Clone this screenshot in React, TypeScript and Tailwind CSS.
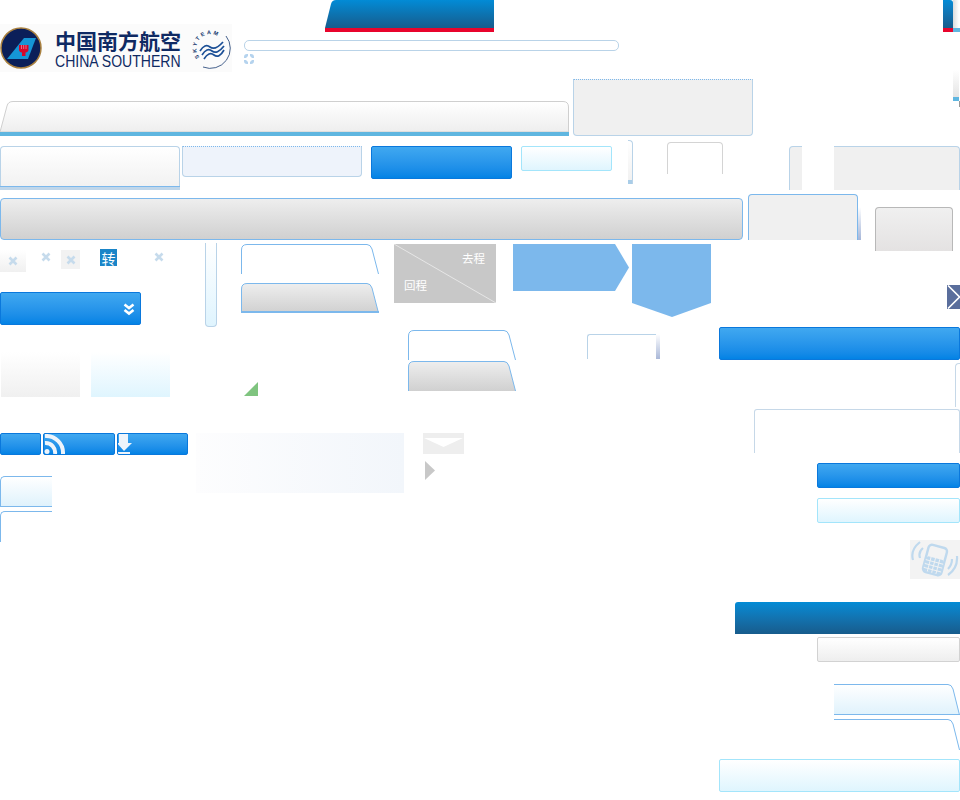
const cx = "absolute";
const blueBtn = "rounded-[2px] border border-[#0a78dc] bg-gradient-to-b from-[#40a8f0] to-[#0283e5]";
const lightBtn = "rounded-[2px] border border-[#a3e5fb] bg-gradient-to-b from-white to-[#dff5fe]";
const greyBar = "bg-gradient-to-b from-[#eeeeee] to-[#d0d0d0]";

// slanted tab outline, with optional gradient fill
function SlantTab({
  w,
  h,
  fill,
  bottom,
  bottomWidth = 2,
  left = true,
  slant = 8,
  className,
}: {
  w: number;
  h: number;
  fill?: [string, string];
  bottom?: string;
  bottomWidth?: number;
  left?: boolean;
  slant?: number;
  className?: string;
}) {
  const id = `g${w}${h}${fill ? fill[1].slice(1) : "n"}`;
  const top = left ? `M0.5 ${h} V6 Q0.5 0.5 6 0.5` : `M0 0.5`;
  const d = `${top} H${w - slant - 4} Q${w - slant - 0.5} 0.5 ${w - slant + 1} 5 L${w - 0.5} ${h}`;
  return (
    <svg className={className} width={w} height={h} viewBox={`0 0 ${w} ${h}`}>
      {fill ? (
        <defs>
          <linearGradient id={id} x1="0" y1="0" x2="0" y2="1">
            <stop offset="0" stopColor={fill[0]} />
            <stop offset="1" stopColor={fill[1]} />
          </linearGradient>
        </defs>
      ) : null}
      {fill ? <path d={`${d} H0 Z`} fill={`url(#${id})`} /> : null}
      <path d={d} fill="none" stroke="#7cb8ec" strokeWidth="1" />
      {bottom ? (
        <path d={`M0 ${h - bottomWidth / 2} H${w}`} stroke={bottom} strokeWidth={bottomWidth} />
      ) : null}
    </svg>
  );
}

function Cross({ className }: { className?: string }) {
  return (
    <svg className={className} width="10" height="10" viewBox="0 0 10 10">
      <path d="M1.5 1.5 L8.5 8.5 M8.5 1.5 L1.5 8.5" stroke="#c6dbec" strokeWidth="2.6" />
    </svg>
  );
}

function Logo() {
  return (
    <div className="absolute left-0 top-[24px] h-[48px] w-[232px] bg-[#fbfbfb]">
      <svg className="absolute left-0 top-[3px]" width="42" height="42" viewBox="0 0 42 42">
        <circle cx="21" cy="21" r="20" fill="#0b1f59" stroke="#a9803f" strokeWidth="1.5" />
        <path d="M7 32 L24 11 H36 L28 32 Z" fill="#1596d6" />
        <path d="M19 18 H28.5 V22.5 Q28.5 25 25.5 25.5 V29 H22 V25.5 Q19 25 19 22.5 Z" fill="#d6082a" />
        <path d="M21.5 18 V22 M23.7 18 V22 M26 18 V22" stroke="#f3b7c0" strokeWidth="0.6" />
      </svg>
      <span className="absolute left-[55px] top-[4px] whitespace-nowrap font-['Noto_Sans_CJK_SC',sans-serif] text-[21px] font-bold leading-[25px] text-[#0f2a63]">
        中国南方航空
      </span>
      <span className="absolute left-[55px] top-[29px] origin-left scale-x-[0.826] whitespace-nowrap font-['Liberation_Sans',sans-serif] text-[17px] leading-[17px] text-[#0f2a63]">
        CHINA SOUTHERN
      </span>
      <svg className="absolute left-[190px] top-[4px]" width="42" height="42" viewBox="0 0 42 42">
        <defs>
          <path id="skyArc" d="M9.8 29.4 A14 14 0 0 1 31 11" />
        </defs>
        <text fontFamily="Liberation Sans, sans-serif" fontSize="5.5" fontWeight="700" fill="#17396f" letterSpacing="2">
          <textPath href="#skyArc">SKYTEAM</textPath>
        </text>
        <path d="M36 8 A20 20 0 0 1 13 39" fill="none" stroke="#17396f" strokeWidth="0.8" />
        <path
          d="M10 23 Q15 15 20 19 T33 14 M12 27 Q17 19 22 23 T34 18 M14 31 Q19 23 24 27 T34 22"
          fill="none"
          stroke="#1b4f96"
          strokeWidth="1.7"
        />
      </svg>
    </div>
  );
}

export default function App() {
  return (
    <div className="relative h-[800px] w-[960px] overflow-hidden bg-white">
      <Logo />

      {/* red top tabs */}
      <svg className={`${cx} left-[325px] top-0`} width="169" height="32" viewBox="0 0 169 32">
        <defs>
          <linearGradient id="navTab" x1="0" y1="0" x2="0" y2="1">
            <stop offset="0" stopColor="#028bd6" />
            <stop offset="1" stopColor="#175c8c" />
          </linearGradient>
        </defs>
        <path d="M0 28 L6 4 Q7 0 11 0 H169 V28 Z" fill="url(#navTab)" />
        <rect x="0" y="28" width="169" height="4" fill="#e8042c" />
      </svg>
      <div className="absolute left-[943px] top-0 h-[28px] w-[10px] rounded-tr-[3px] bg-gradient-to-b from-[#028bd6] to-[#175c8c]" />
      <div className="absolute left-[953px] top-0 h-[28px] w-[6px] bg-gradient-to-r from-[#dcdcdc] to-white" />
      <div className="absolute left-[943px] top-[28px] h-[4px] w-[10px] bg-[#e8042c]" />
      <div className="absolute left-[953px] top-[28px] h-[4px] w-[7px] bg-[#5fb6e0]" />

      {/* search outline */}
      <div className="absolute left-[244px] top-[40px] h-[11px] w-[375px] rounded-[5px] border border-[#b9d3e8]" />
      <svg className={`${cx} left-[244px] top-[54px]`} width="10" height="10" viewBox="0 0 10 10">
        <path d="M0 4 V3 Q0 0 3 0 H4 V2 L2 4 Z M10 4 V3 Q10 0 7 0 H6 V2 L8 4 Z M0 6 V7 Q0 10 3 10 H4 V8 L2 6 Z M10 6 V7 Q10 10 7 10 H6 V8 L8 6 Z" fill="#b5d3ee" />
      </svg>

      {/* large tab */}
      <svg className={`${cx} left-0 top-[101px]`} width="569" height="35" viewBox="0 0 569 35">
        <defs>
          <linearGradient id="bigTab" x1="0" y1="0" x2="0" y2="1">
            <stop offset="0" stopColor="#ffffff" />
            <stop offset="1" stopColor="#eeeeee" />
          </linearGradient>
        </defs>
        <path d="M0 31 L7 5 Q8 0.5 13 0.5 H563 Q568.5 0.5 568.5 6 V31 Z" fill="url(#bigTab)" stroke="#cfcfcf" />
        <rect x="0" y="31" width="569" height="4" fill="#5fb6e0" />
      </svg>
      <div className="absolute left-[573px] top-[79px] h-[57px] w-[180px] rounded-b-[4px] border border-[#b9d3e8] border-t-[#7cb8ec] bg-[#f0f0f0] [border-top-style:dotted]" />
      <div className="absolute left-[953px] top-[70px] h-[27px] w-[6px] bg-gradient-to-b from-white to-[#e4e4e4]" />
      <div className="absolute left-[953px] top-[97px] h-[4px] w-[6px] bg-[#5fb6e0]" />
      <div className="absolute left-[959px] top-[101px] h-[6px] w-[1px] bg-[#999999]" />

      {/* second row */}
      <div className="absolute left-0 top-[146px] flex items-start gap-[2px]">
        <div className="relative h-[44px] w-[180px] rounded-t-[4px] border-x border-t border-[#b9d3e8] bg-gradient-to-b from-white to-[#f0f0f0]">
          <div className="absolute inset-x-[-1px] bottom-0 h-[4px] border-t border-[#7cb8ec] bg-[#bfd6ea]" />
        </div>
        <div className="h-[31px] w-[180px] rounded-b-[4px] border border-[#b9d3e8] border-t-[#7cb8ec] bg-[#eef3fb] [border-top-style:dotted]" />
        <div className={`${blueBtn} ml-[7px] h-[33px] w-[141px]`} />
        <div className={`${lightBtn} ml-[7px] h-[25px] w-[91px]`} />
      </div>
      <div className="absolute left-[628px] top-[140px] h-[44px] w-[5px] rounded-tr-[4px] border-r border-t border-[#b9d3e8] bg-gradient-to-b from-white to-[#f0f0f0]">
        <div className="absolute inset-x-0 bottom-0 h-[4px] bg-[#a9cde8]" />
      </div>
      <div className="absolute left-[667px] top-[142px] h-[32px] w-[56px] rounded-t-[4px] border-x border-t border-[#d4d4d4]" />
      <div className="absolute left-[789px] top-[146px] h-[44px] w-[171px] rounded-t-[4px] border-x border-t border-[#b9d3e8] bg-[#f0f0f0]">
        <div className="absolute left-[12px] top-[-1px] h-[44px] w-[32px] bg-white" />
      </div>

      {/* grey bar row */}
      <div className={`absolute left-0 top-[198px] h-[42px] w-[743px] rounded-[4px] border border-[#7cb8ec] ${greyBar}`} />
      <div className="absolute left-[748px] top-[194px] h-[46px] w-[110px] rounded-t-[4px] border-x border-t border-[#7cb8ec] bg-[#f0f0f0]" />
      <div className="absolute left-[858px] top-[207px] h-[33px] w-[3px] bg-gradient-to-b from-white to-[#a6b6d8]" />
      <div className="absolute left-[875px] top-[207px] h-[44px] w-[78px] rounded-t-[4px] border-x border-t border-[#b8b8b8] bg-gradient-to-b from-[#f0f0f0] to-[#e4e2e2]" />

      {/* close icons */}
      <div className="absolute left-0 top-[250px] flex h-[22px] w-[26px] items-center justify-center bg-gradient-to-b from-white to-[#f0f0f0]">
        <Cross />
      </div>
      <Cross className={`${cx} left-[41px] top-[252px]`} />
      <div className="absolute left-[61px] top-[250px] flex h-[19px] w-[19px] items-center justify-center bg-[#f2f2f2]">
        <Cross />
      </div>
      <div className="absolute left-[100px] top-[249px] flex h-[17px] w-[17px] items-center justify-center bg-[#1a85c8] font-['Noto_Sans_CJK_SC',sans-serif] text-[14px] leading-none text-white">
        转
      </div>
      <Cross className={`${cx} left-[154px] top-[252px]`} />

      <div className={`${blueBtn} absolute left-0 top-[292px] h-[33px] w-[141px]`}>
        <svg className="absolute left-[122px] top-[10px]" width="12" height="13" viewBox="0 0 12 13">
          <path d="M1.5 1.5 L6 5 L10.5 1.5 M1.5 7 L6 10.5 L10.5 7" fill="none" stroke="white" strokeWidth="2.6" />
        </svg>
      </div>

      <div className="absolute left-[205px] top-[243px] h-[84px] w-[12px] rounded-b-[4px] border-x border-b border-[#b9d3e8] bg-gradient-to-b from-white to-[#dff4fe]" />

      {/* slanted tabs */}
      <div className="absolute left-[241px] top-[244px] flex flex-col gap-[9px]">
        <SlantTab w={138} h={30} />
        <SlantTab w={138} h={30} fill={["#eeeeee", "#d0d0d0"]} bottom="#7cb8ec" />
      </div>
      <div className="absolute left-[408px] top-[330px] flex flex-col gap-[1px]">
        <SlantTab w={108} h={30} />
        <SlantTab w={108} h={30} fill={["#eeeeee", "#d0d0d0"]} />
      </div>

      {/* direction table corner */}
      <div className="absolute left-[394px] top-[244px] h-[59px] w-[102px] bg-[#c8c8c8] font-['Noto_Sans_CJK_SC',sans-serif] text-[11.5px] leading-none text-white">
        <svg className="absolute inset-0" width="102" height="59" viewBox="0 0 102 59">
          <path d="M0 0 L102 59" stroke="#e6e6e6" strokeWidth="1" />
        </svg>
        <span className="absolute left-[68px] top-[9px]">去程</span>
        <span className="absolute left-[10px] top-[36px]">回程</span>
      </div>

      <svg className={`${cx} left-[513px] top-[244px]`} width="116" height="47" viewBox="0 0 116 47">
        <path d="M0 0 H102 L116 23.5 L102 47 H0 Z" fill="#7cb8ec" />
      </svg>
      <svg className={`${cx} left-[632px] top-[244px]`} width="79" height="73" viewBox="0 0 79 73">
        <path d="M0 0 H79 V59 L40 73 L0 59 Z" fill="#7cb8ec" />
      </svg>

      <div className="absolute left-[947px] top-[285px] h-[24px] w-[13px] overflow-hidden bg-[#5a6e9c]">
        <svg className="absolute left-0 top-0" width="13" height="24" viewBox="0 0 13 24">
          <path d="M1 0.5 L12.5 12 L1 23.5" fill="none" stroke="white" strokeWidth="1.6" />
        </svg>
      </div>

      <div className={`${blueBtn} absolute left-[719px] top-[327px] h-[33px] w-[241px]`} />

      <div className="absolute left-[587px] top-[334px] h-[25px] w-[69px] rounded-tl-[3px] border-l border-t border-[#b9d3e8]" />
      <div className="absolute left-[656px] top-[334px] h-[25px] w-[4px] bg-gradient-to-b from-white to-[#aab8d8]" />
      <div className="absolute left-[955px] top-[363px] h-[44px] w-[5px] rounded-tl-[4px] border-l border-t border-[#c6d8e8]" />
      <div className="absolute left-[754px] top-[409px] h-[44px] w-[206px] rounded-t-[3px] border-x border-t border-[#c6d8e8]" />

      {/* gradient swatches */}
      <div className="absolute left-[1px] top-[352px] flex gap-[11px]">
        <div className="h-[45px] w-[79px] bg-gradient-to-b from-white to-[#f0f0f0]" />
        <div className="h-[45px] w-[79px] bg-gradient-to-b from-white to-[#dff5fe]" />
      </div>
      <svg className={`${cx} left-[244px] top-[382px]`} width="14" height="14" viewBox="0 0 14 14">
        <path d="M14 0 V14 H0 Z" fill="#7fc47f" />
      </svg>

      {/* small blue buttons */}
      <div className="absolute left-0 top-[433px] flex gap-[2px]">
        <div className={`${blueBtn} h-[22px] w-[41px]`} />
        <div className={`${blueBtn} relative h-[22px] w-[72px] overflow-hidden`}>
          <svg className="absolute left-0 top-0" width="22" height="20" viewBox="0 0 22 20">
            <circle cx="3" cy="17.5" r="2.5" fill="#eef4fb" />
            <path d="M1 9 A9.5 9.5 0 0 1 11 20 M1 2 A17 17 0 0 1 19 20" fill="none" stroke="#eef4fb" strokeWidth="4" />
          </svg>
        </div>
        <div className={`${blueBtn} relative h-[22px] w-[71px] overflow-hidden`}>
          <svg className="absolute left-0 top-0" width="16" height="20" viewBox="0 0 16 20">
            <path d="M1 0 H10 V9 H14 L6 17 L-1 9 H1 Z M-1 18 H12 V20 H-1 Z" fill="#eef4fb" />
          </svg>
        </div>
      </div>

      <div className="absolute left-[196px] top-[433px] h-[60px] w-[208px] bg-gradient-to-r from-[#fdfdfe] to-[#f2f6fb]" />

      {/* envelope and arrow */}
      <svg className={`${cx} left-[423px] top-[433px]`} width="41" height="21" viewBox="0 0 41 21">
        <rect width="41" height="21" fill="#eeeeee" />
        <path d="M1 5 H40 L20.5 14 Z" fill="white" />
      </svg>
      <svg className={`${cx} left-[425px] top-[461px]`} width="10" height="19" viewBox="0 0 10 19">
        <path d="M0 0 L10 9.5 L0 19 Z" fill="#c8c8c8" />
      </svg>

      {/* left tabs */}
      <div className="absolute left-0 top-[476px] flex flex-col gap-[4px]">
        <div className="h-[31px] w-[52px] rounded-tl-[5px] border-y border-l border-[#7cb8ec] bg-gradient-to-b from-white to-[#dff2fc]" />
        <div className="h-[31px] w-[52px] rounded-tl-[5px] border-l border-t border-[#7cb8ec]" />
      </div>

      {/* right column */}
      <div className="absolute right-0 top-[463px] flex flex-col gap-[10px]">
        <div className={`${blueBtn} h-[25px] w-[143px]`} />
        <div className={`${lightBtn} h-[25px] w-[143px]`} />
      </div>

      <div className="absolute left-[910px] top-[540px] h-[39px] w-[50px] bg-[#f3f3f3]">
        <svg className="absolute left-0 top-0" width="50" height="39" viewBox="0 0 50 39">
          <g transform="rotate(15 25 20)">
            <rect x="15.5" y="6" width="19" height="28" rx="3.5" fill="none" stroke="#bfd9ee" strokeWidth="2.4" />
            <rect x="16.5" y="18" width="17" height="15" rx="2" fill="#bfd9ee" />
            <path d="M16 22 H34 M16 26 H34 M16 30 H34 M20.5 18 V33 M25 18 V33 M29.5 18 V33" stroke="#f3f3f3" strokeWidth="0.9" />
          </g>
          <path d="M10 2 Q0 10 3 20 M13 8 Q8 12 10 18 M47 16 Q48 28 38 35 M42 19 Q42 25 38 29" fill="none" stroke="#bfd9ee" strokeWidth="2.2" />
        </svg>
      </div>

      <div className="absolute left-[735px] top-[602px] h-[32px] w-[225px] rounded-tl-[3px] bg-gradient-to-b from-[#028bd6] to-[#175c8c]" />
      <div className="absolute left-[817px] top-[637px] h-[25px] w-[143px] rounded-[2px] border border-[#d2d2d2] bg-gradient-to-b from-white to-[#eeeeee]" />

      <div className="absolute left-[834px] top-[684px] flex flex-col gap-[4px]">
        <SlantTab w={126} h={31} left={false} fill={["#ffffff", "#dff2fc"]} bottom="#7cb8ec" bottomWidth={1} />
        <SlantTab w={126} h={31} left={false} />
      </div>
      <div className={`${lightBtn} absolute left-[719px] top-[759px] h-[33px] w-[241px]`} />
    </div>
  );
}
